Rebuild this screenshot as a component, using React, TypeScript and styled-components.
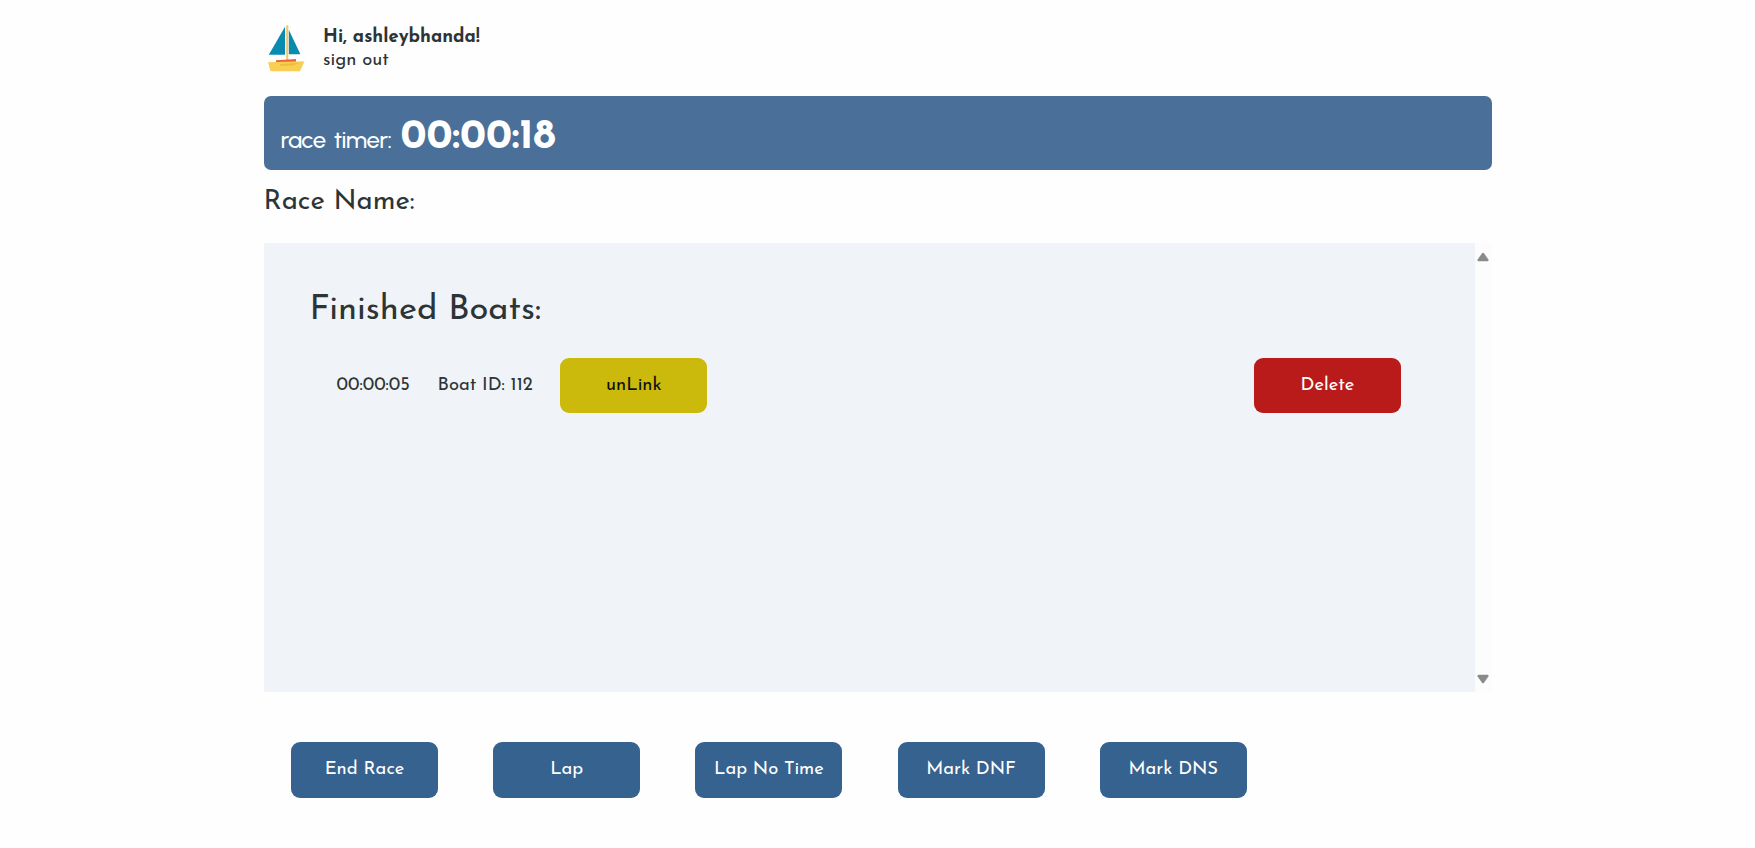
import React from 'react';
import styled, { createGlobalStyle } from 'styled-components';

const GlobalStyle = createGlobalStyle`
  *, *::before, *::after { box-sizing: border-box; }
  html { font-size: 18.4px; }
  body {
    margin: 0;
    background: #fefefe;
    color: #2d3436;
    font-family: "Josefin Sans", Lato, sans-serif;
    font-size: 1rem;
  }
  h1, h2, p { margin: 0; font-weight: 400; }
`;

const Page = styled.main`
  width: 1228px;
  height: 848px;
  margin: 0 auto;
  display: flex;
  flex-direction: column;
`;

const Header = styled.header`
  display: flex;
  height: 96.4px;
  padding: 23px 0 0 3px;
  gap: 18.5px;
`;

const Logo = styled.svg`
  width: 38px;
  height: 50px;
  flex: none;
`;

const Account = styled.div`
  padding-top: 2.6px;
  line-height: 23px;
`;

const Greeting = styled.p`
  font-weight: 700;
`;

const TimerBar = styled.section`
  display: flex;
  align-items: baseline;
  gap: 9px;
  height: 73.4px;
  padding: 17.4px 17px 0;
  border-radius: 7px;
  background: #4a7099;
  color: #fff;
`;

const TimerLabel = styled.span`
  font-family: Urbanist, Lato, sans-serif;
  font-size: 24px;
  font-weight: 500;
  letter-spacing: -0.5px;
  word-spacing: 2.8px;
`;

const TimerValue = styled.span`
  font-size: 2.25rem;
  line-height: 47px;
  font-weight: 700;
`;

const RaceName = styled.h1`
  height: 73.4px;
  padding-top: 16.4px;
  font-size: 1.5rem;
  line-height: 32px;
`;

const Panel = styled.section`
  display: flex;
  height: 448.8px;
`;

const PanelBody = styled.div`
  flex: 1;
  padding: 47.8px 73.5px 0 46px;
  background: #f0f4f9;
`;

const Scrollbar = styled.div`
  display: flex;
  flex-direction: column;
  justify-content: space-between;
  align-items: center;
  width: 17px;
  padding: 9px 0 8px;
  background: #fcfcfc;
`;

const Arrow = styled.svg<{ $down?: boolean }>`
  width: 12px;
  height: 10px;
  transform: ${p => (p.$down ? 'rotate(180deg)' : 'none')};
`;

const PanelTitle = styled.h2`
  font-size: 34.5px;
  line-height: 40px;
`;

const BoatRow = styled.div`
  display: flex;
  align-items: center;
  gap: 1.5rem;
  margin-top: 27.2px;
  padding-left: 27px;
  white-space: nowrap;
`;

const Button = styled.button<{ $tone?: string; $ink?: string }>`
  width: 147px;
  height: 3rem;
  padding: 0;
  border: 0;
  border-radius: 9px;
  background: ${p => p.$tone ?? '#35628e'};
  color: ${p => p.$ink ?? '#fff'};
  font: inherit;
  white-space: nowrap;
`;

const DeleteButton = styled(Button)`
  margin-left: auto;
`;

const Actions = styled.footer`
  display: flex;
  gap: 3rem;
  padding: 50.4px 0 0 27.5px;
`;

const actions = ['End Race', 'Lap', 'Lap No Time', 'Mark DNF', 'Mark DNS'];

const ArrowShape = () => <path d="M5 1.3Q6 .3 7 1.3L11.4 7.5Q12 9 10.6 9.3H1.4Q0 9 .6 7.5Z" fill="#8a8a8a" />;

export default function App() {
  return (
    <>
      <GlobalStyle />
      <Page>
        <Header>
          <Logo viewBox="0 0 38 50" aria-hidden="true">
            <path d="M18 3.7V31.8H1.8Z" fill="#098bb0" />
            <path d="M21.8 6.8L33.4 31.2H21.8Z" fill="#098bb0" />
            <path d="M19.2 2.3H21.3V37H19.2Z" fill="#efc66c" />
            <path d="M9 37.3L29 36V40.2H8.7Z" fill="#f0642f" />
            <path d="M1 39.3L37.5 38.3L33.2 47.7Q33 48.2 32.2 48.2H4.6Q3.6 48.2 3.3 47.4Z" fill="#f7cf55" />
            <path d="M12.7 41L33.2 39.8L26.2 42.6L12.7 43Z" fill="#eebc3e" />
          </Logo>
          <Account>
            <Greeting>Hi, ashleybhanda!</Greeting>
            <p>sign out</p>
          </Account>
        </Header>
        <TimerBar>
          <TimerLabel>race timer:</TimerLabel>
          <TimerValue>00:00:18</TimerValue>
        </TimerBar>
        <RaceName>Race Name:</RaceName>
        <Panel>
          <PanelBody>
            <PanelTitle>Finished Boats:</PanelTitle>
            <BoatRow>
              <span>00:00:05</span>
              <span>Boat ID: 112</span>
              <Button $tone="#cbba0b" $ink="#111">unLink</Button>
              <DeleteButton $tone="#b91a1a">Delete</DeleteButton>
            </BoatRow>
          </PanelBody>
          <Scrollbar>
            <Arrow viewBox="0 0 12 10"><ArrowShape /></Arrow>
            <Arrow $down viewBox="0 0 12 10"><ArrowShape /></Arrow>
          </Scrollbar>
        </Panel>
        <Actions>
          {actions.map(label => (
            <Button key={label}>{label}</Button>
          ))}
        </Actions>
      </Page>
    </>
  );
}
